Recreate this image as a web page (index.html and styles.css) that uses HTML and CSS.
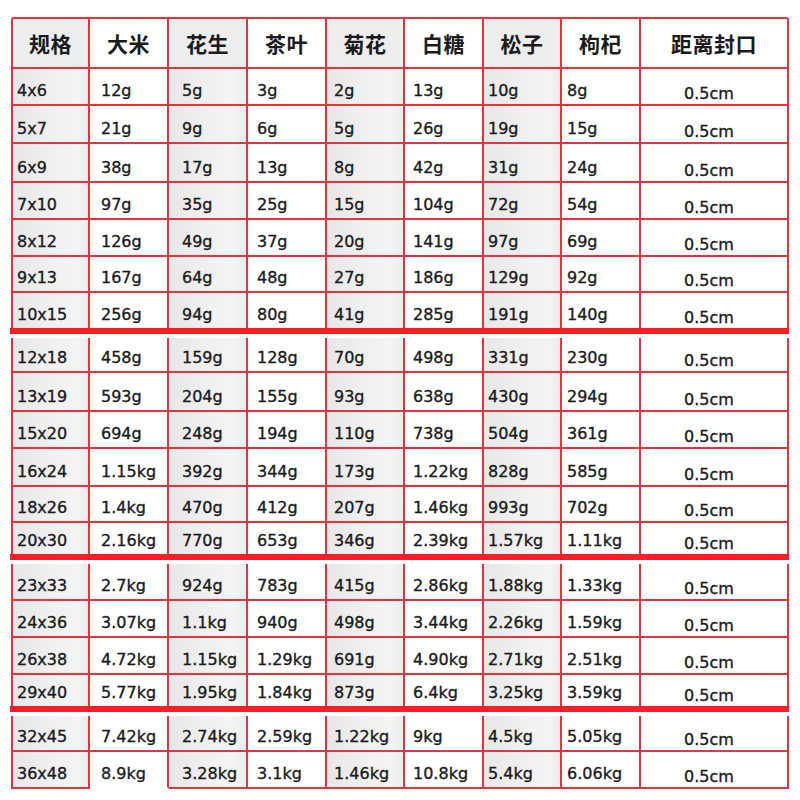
FILE: index.html
```html
<!DOCTYPE html>
<html lang="zh">
<head>
<meta charset="utf-8">
<title>规格表</title>
<link rel="stylesheet" href="styles.css">
</head>
<body>
<div class="page">
  <div class="section s1">
    <div class="h g">规格</div><div class="h">大米</div><div class="h g">花生</div><div class="h">茶叶</div><div class="h g">菊花</div><div class="h">白糖</div><div class="h g">松子</div><div class="h">枸杞</div><div class="h">距离封口</div>
    <div class="c g">4x6</div><div class="c">12g</div><div class="c g">5g</div><div class="c">3g</div><div class="c g">2g</div><div class="c">13g</div><div class="c g">10g</div><div class="c">8g</div><div class="c e">0.5cm</div>
    <div class="c g">5x7</div><div class="c">21g</div><div class="c g">9g</div><div class="c">6g</div><div class="c g">5g</div><div class="c">26g</div><div class="c g">19g</div><div class="c">15g</div><div class="c e">0.5cm</div>
    <div class="c g">6x9</div><div class="c">38g</div><div class="c g">17g</div><div class="c">13g</div><div class="c g">8g</div><div class="c">42g</div><div class="c g">31g</div><div class="c">24g</div><div class="c e">0.5cm</div>
    <div class="c g">7x10</div><div class="c">97g</div><div class="c g">35g</div><div class="c">25g</div><div class="c g">15g</div><div class="c">104g</div><div class="c g">72g</div><div class="c">54g</div><div class="c e">0.5cm</div>
    <div class="c g">8x12</div><div class="c">126g</div><div class="c g">49g</div><div class="c">37g</div><div class="c g">20g</div><div class="c">141g</div><div class="c g">97g</div><div class="c">69g</div><div class="c e">0.5cm</div>
    <div class="c g">9x13</div><div class="c">167g</div><div class="c g">64g</div><div class="c">48g</div><div class="c g">27g</div><div class="c">186g</div><div class="c g">129g</div><div class="c">92g</div><div class="c e">0.5cm</div>
    <div class="c g l">10x15</div><div class="c l">256g</div><div class="c g l">94g</div><div class="c l">80g</div><div class="c g l">41g</div><div class="c l">285g</div><div class="c g l">191g</div><div class="c l">140g</div><div class="c e l">0.5cm</div>
  </div>
  <div class="band"></div>
  <div class="section s2">
    <div class="c g">12x18</div><div class="c">458g</div><div class="c g">159g</div><div class="c">128g</div><div class="c g">70g</div><div class="c">498g</div><div class="c g">331g</div><div class="c">230g</div><div class="c e">0.5cm</div>
    <div class="c g">13x19</div><div class="c">593g</div><div class="c g">204g</div><div class="c">155g</div><div class="c g">93g</div><div class="c">638g</div><div class="c g">430g</div><div class="c">294g</div><div class="c e">0.5cm</div>
    <div class="c g">15x20</div><div class="c">694g</div><div class="c g">248g</div><div class="c">194g</div><div class="c g">110g</div><div class="c">738g</div><div class="c g">504g</div><div class="c">361g</div><div class="c e">0.5cm</div>
    <div class="c g">16x24</div><div class="c">1.15kg</div><div class="c g">392g</div><div class="c">344g</div><div class="c g">173g</div><div class="c">1.22kg</div><div class="c g">828g</div><div class="c">585g</div><div class="c e">0.5cm</div>
    <div class="c g">18x26</div><div class="c">1.4kg</div><div class="c g">470g</div><div class="c">412g</div><div class="c g">207g</div><div class="c">1.46kg</div><div class="c g">993g</div><div class="c">702g</div><div class="c e">0.5cm</div>
    <div class="c g l">20x30</div><div class="c l">2.16kg</div><div class="c g l">770g</div><div class="c l">653g</div><div class="c g l">346g</div><div class="c l">2.39kg</div><div class="c g l">1.57kg</div><div class="c l">1.11kg</div><div class="c e l">0.5cm</div>
  </div>
  <div class="band"></div>
  <div class="section s3">
    <div class="c g">23x33</div><div class="c">2.7kg</div><div class="c g">924g</div><div class="c">783g</div><div class="c g">415g</div><div class="c">2.86kg</div><div class="c g">1.88kg</div><div class="c">1.33kg</div><div class="c e">0.5cm</div>
    <div class="c g">24x36</div><div class="c">3.07kg</div><div class="c g">1.1kg</div><div class="c">940g</div><div class="c g">498g</div><div class="c">3.44kg</div><div class="c g">2.26kg</div><div class="c">1.59kg</div><div class="c e">0.5cm</div>
    <div class="c g">26x38</div><div class="c">4.72kg</div><div class="c g">1.15kg</div><div class="c">1.29kg</div><div class="c g">691g</div><div class="c">4.90kg</div><div class="c g">2.71kg</div><div class="c">2.51kg</div><div class="c e">0.5cm</div>
    <div class="c g l">29x40</div><div class="c l">5.77kg</div><div class="c g l">1.95kg</div><div class="c l">1.84kg</div><div class="c g l">873g</div><div class="c l">6.4kg</div><div class="c g l">3.25kg</div><div class="c l">3.59kg</div><div class="c e l">0.5cm</div>
  </div>
  <div class="band"></div>
  <div class="section s4">
    <div class="c g">32x45</div><div class="c">7.42kg</div><div class="c g">2.74kg</div><div class="c">2.59kg</div><div class="c g">1.22kg</div><div class="c">9kg</div><div class="c g">4.5kg</div><div class="c">5.05kg</div><div class="c e">0.5cm</div>
    <div class="c g">36x48</div><div class="c open">8.9kg</div><div class="c g">3.28kg</div><div class="c">3.1kg</div><div class="c g">1.46kg</div><div class="c">10.8kg</div><div class="c g">5.4kg</div><div class="c">6.06kg</div><div class="c e">0.5cm</div>
  </div>
</div>
</body>
</html>
```
FILE: styles.css
```css
html, body {
  margin: 0;
  padding: 0;
  background: #ffffff;
}

.page {
  padding: 17px 0 0 11px;
  width: 778px;
}

.section {
  display: grid;
  grid-template-columns: 77px 79px 79px 79px 78px 79px 78px 79px 148px;
  border-left: 2px solid #e6343e;
  width: 778px;
  box-sizing: border-box;
}

.s1 {
  border-top: 2px solid #e6343e;
  border-top-left-radius: 3px;
  border-top-right-radius: 3px;
  grid-template-rows: 50px 37px 38px 39px 37px 37px 36px 35px;
}

.s2 {
  grid-template-rows: 35px 39px 37px 38px 36px 31px;
}

.s3 {
  grid-template-rows: 37px 37px 37px 31px;
}

.s4 {
  grid-template-rows: 36px 37px;
}

.band {
  height: 6px;
  width: 779px;
  margin-left: -1px;
  background: #fb1f24;
  margin-bottom: 4px;
}

.section + .band + .section {
  margin-top: 0;
}

.h,
.c {
  box-sizing: border-box;
  border-right: 2px solid #e6343e;
  border-bottom: 2px solid #e6343e;
  display: flex;
  white-space: nowrap;
  color: #1b1b1b;
  background: #ffffff;
}

.h {
  align-items: center;
  justify-content: center;
  font-family: "Noto Sans CJK SC", "Noto Sans", sans-serif;
  font-weight: 700;
  font-size: 21px;
  line-height: 24px;
  padding-bottom: 1px;
  letter-spacing: 0.5px;
}

.c {
  align-items: flex-end;
  font-family: "DejaVu Sans", "Liberation Sans", sans-serif;
  font-size: 16px;
  line-height: 18px;
  padding-bottom: 4px;
  -webkit-text-stroke: 0.35px #1b1b1b;
}

.g {
  background: linear-gradient(to right, #e7e7e7 0%, #f1f1f1 55%, #f4f4f4 85%, #ececec 100%);
}

.h.g {
  background: #ededed;
}

.c.l {
  border-bottom: none;
}

.c.open {
  border-bottom-color: transparent;
}

.c:nth-child(9n+1) { padding-left: 4px; }
.c:nth-child(9n+2) { padding-left: 11px; }
.c:nth-child(9n+3) { padding-left: 13px; }
.c:nth-child(9n+4) { padding-left: 9px; }
.c:nth-child(9n+5) { padding-left: 7px; }
.c:nth-child(9n+6) { padding-left: 8px; }
.c:nth-child(9n+7) { padding-left: 4px; }
.c:nth-child(9n+8) { padding-left: 5px; }

.c.e {
  justify-content: center;
  padding-right: 10px;
  padding-bottom: 1px;
}

.s4 .c:nth-child(9n+1) {
  border-bottom-left-radius: 0;
}
```
